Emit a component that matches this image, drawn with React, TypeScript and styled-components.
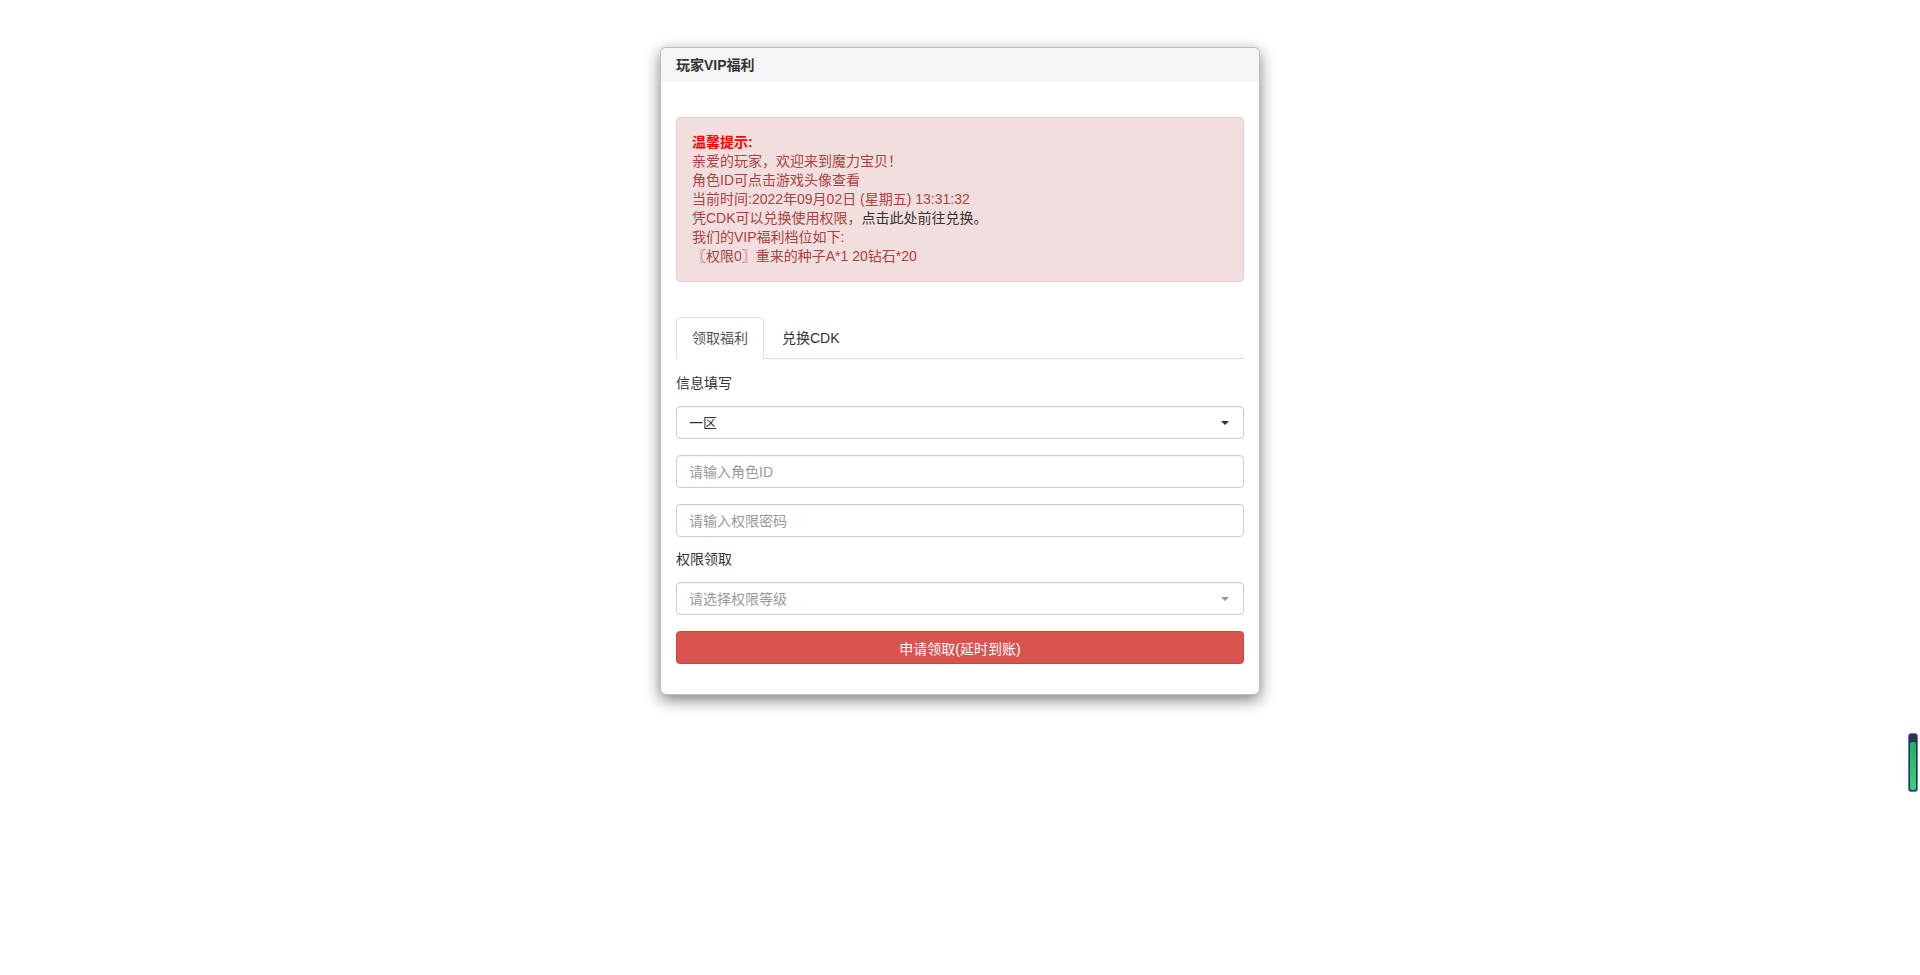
import styled, { createGlobalStyle } from "styled-components";

const GlobalStyle = createGlobalStyle`
  *, *::before, *::after {
    box-sizing: border-box;
  }
  body {
    margin: 0;
    background: #ffffff;
    color: #333333;
    font-family: "Liberation Sans", "Noto Sans CJK SC", sans-serif;
    font-size: 14px;
    line-height: 20px;
  }
`;

const Page = styled.div`
  min-height: 975px;
  padding-top: 47px;
`;

const Panel = styled.div`
  width: 600px;
  margin: 0 auto;
  background: #ffffff;
  border: 1px solid rgba(0, 0, 0, 0.25);
  border-radius: 6px;
  box-shadow: 0 5px 15px rgba(0, 0, 0, 0.5);
  overflow: hidden;
`;

const PanelHeading = styled.div`
  height: 34px;
  padding: 0 15px;
  display: flex;
  align-items: center;
  background: #f5f5f5;
`;

const PanelTitle = styled.h3`
  margin: 0;
  font-size: 14px;
  font-weight: bold;
  line-height: 18px;
  color: #333333;
`;

const PanelBody = styled.div`
  padding: 15px;
`;

const Alert = styled.div`
  margin: 20px 0 35px;
  padding: 15px;
  background: #f2dede;
  border: 1px solid #ebccd1;
  border-radius: 4px;
  color: #a94442;
  line-height: 19px;
`;

const AlertTitle = styled.strong`
  color: #ff0000;
`;

const AlertLink = styled.a`
  color: #333333;
  text-decoration: none;
  cursor: pointer;
`;

const Tabs = styled.ul`
  display: flex;
  margin: 0;
  padding: 0;
  list-style: none;
  border-bottom: 1px solid #dddddd;
`;

const Tab = styled.li<{ $active?: boolean }>`
  margin-right: 2px;
  margin-bottom: -1px;
  padding: 10px 15px;
  line-height: 20px;
  border: 1px solid ${(p) => (p.$active ? "#dddddd" : "transparent")};
  border-bottom-color: transparent;
  border-radius: 4px 4px 0 0;
  background: ${(p) => (p.$active ? "#ffffff" : "transparent")};
  color: ${(p) => (p.$active ? "#555555" : "#333333")};
  cursor: pointer;
`;

const FormLabel = styled.div<{ $top?: number }>`
  margin-top: ${(p) => p.$top ?? 0}px;
  margin-bottom: 13px;
  line-height: 20px;
  color: #333333;
`;

const controlBase = `
  display: flex;
  align-items: center;
  width: 100%;
  height: 33px;
  padding: 0 12px;
  border: 1px solid #cccccc;
  border-radius: 4px;
  background: #ffffff;
  font-family: "Liberation Sans", "Noto Sans CJK SC", sans-serif;
  font-size: 14px;
  color: #333333;
  box-shadow: inset 0 1px 1px rgba(0, 0, 0, 0.04);
`;

const SelectBox = styled.div<{ $placeholder?: boolean; $mb?: number }>`
  ${controlBase}
  justify-content: space-between;
  margin-bottom: ${(p) => p.$mb ?? 16}px;
  color: ${(p) => (p.$placeholder ? "#999999" : "#333333")};
  cursor: pointer;
`;

const Caret = styled.span<{ $light?: boolean }>`
  width: 0;
  height: 0;
  margin-right: 2px;
  border-left: 4px solid transparent;
  border-right: 4px solid transparent;
  border-top: 4px solid ${(p) => (p.$light ? "#999999" : "#333333")};
`;

const TextInput = styled.input<{ $mb?: number }>`
  ${controlBase}
  margin: 0 0 ${(p) => p.$mb ?? 16}px;
  outline: none;

  &::placeholder {
    color: #999999;
  }
`;

const SubmitButton = styled.button`
  display: block;
  width: 100%;
  height: 33px;
  margin: 0 0 15px;
  padding: 0 12px;
  background: #d9534f;
  border: 1px solid #d43f3a;
  border-radius: 4px;
  color: #ffffff;
  font-family: "Liberation Sans", "Noto Sans CJK SC", sans-serif;
  font-size: 14px;
  cursor: pointer;
`;

const SideGauge = styled.div`
  position: fixed;
  top: 733px;
  right: 2px;
  width: 10px;
  height: 59px;
  display: flex;
  flex-direction: column;
  border: 1px solid #4f7cf5;
  border-radius: 3px;
  background: #2e3440;
  overflow: hidden;
`;

const GaugeFill = styled.div`
  flex: 1;
  margin: 8px 1px 1px;
  border-radius: 2px;
  background: linear-gradient(#1fb356, #3fd072);
`;

export default function App() {
  return (
    <>
      <GlobalStyle />
      <Page>
        <Panel>
          <PanelHeading>
            <PanelTitle>玩家VIP福利</PanelTitle>
          </PanelHeading>
          <PanelBody>
            <Alert>
              <AlertTitle>温馨提示:</AlertTitle>
              <br />
              亲爱的玩家，欢迎来到魔力宝贝！
              <br />
              角色ID可点击游戏头像查看
              <br />
              当前时间:2022年09月02日 (星期五) 13:31:32
              <br />
              凭CDK可以兑换使用权限，<AlertLink>点击此处前往兑换。</AlertLink>
              <br />
              我们的VIP福利档位如下:
              <br />
              〖权限0〗重来的种子A*1 20钻石*20
            </Alert>

            <Tabs>
              <Tab $active>领取福利</Tab>
              <Tab>兑换CDK</Tab>
            </Tabs>

            <FormLabel $top={14}>信息填写</FormLabel>
            <SelectBox>
              <span>一区</span>
              <Caret />
            </SelectBox>
            <TextInput placeholder="请输入角色ID" />
            <TextInput placeholder="请输入权限密码" $mb={12} />

            <FormLabel>权限领取</FormLabel>
            <SelectBox $placeholder>
              <span>请选择权限等级</span>
              <Caret $light />
            </SelectBox>
            <SubmitButton>申请领取(延时到账)</SubmitButton>
          </PanelBody>
        </Panel>
      </Page>
      <SideGauge>
        <GaugeFill />
      </SideGauge>
    </>
  );
}
